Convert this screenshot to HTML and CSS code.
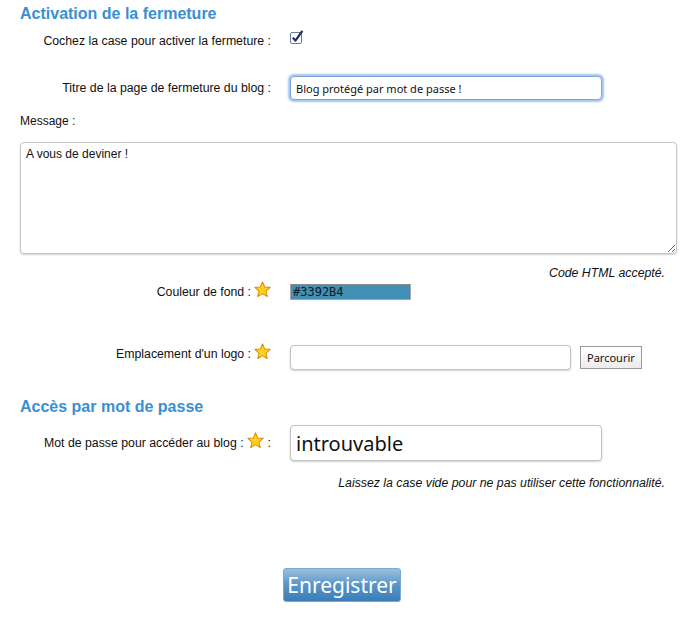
FILE: index.html
```html
<!DOCTYPE html>
<html lang="fr">

<head>
    <meta charset="UTF-8">
    <meta name="viewport" content="width=device-width, initial-scale=1.0">
    <title>Fermeture du blog</title>
    <link rel="stylesheet" href="styles.css">
</head>

<body>

    <form class="container">
        <h2>Activation de la fermeture</h2>

        <div class="row row-check">
            <label class="label">Cochez la case pour activer la fermeture :</label>
            <span class="checkbox">
                <svg width="14" height="14" viewBox="0 0 14 14">
                    <rect x="0.5" y="2.5" width="11" height="11" rx="1.5" fill="#fff" stroke="#6d7c96" />
                    <path d="M2.8 7.6 L5.4 10.6 L12.4 0.8" fill="none" stroke="#1c2d63" stroke-width="2.2"
                        stroke-linejoin="round" />
                </svg>
            </span>
        </div>

        <div class="row row-title">
            <label class="label">Titre de la page de fermeture du blog :</label>
            <input class="field field-focus" type="text" value="Blog protégé par mot de passe !">
        </div>

        <p class="free-label">Message :</p>
        <textarea class="message">A vous de deviner !</textarea>
        <p class="note">Code HTML accepté.</p>

        <div class="row row-color">
            <label class="label">Couleur de fond : <span class="star"><svg width="17" height="17" viewBox="0 0 20 20">
                        <polygon points="10,1 12.6,7 19,7.5 14.1,11.8 15.6,18.3 10,14.8 4.4,18.3 5.9,11.8 1,7.5 7.4,7"
                            fill="#ffd21f" stroke="#e08a00" stroke-width="1.2" stroke-linejoin="round" />
                    </svg></span></label>
            <input class="color-field" type="text" value="#3392B4">
        </div>

        <div class="row row-logo">
            <label class="label">Emplacement d'un logo : <span class="star"><svg width="17" height="17" viewBox="0 0 20 20">
                        <polygon points="10,1 12.6,7 19,7.5 14.1,11.8 15.6,18.3 10,14.8 4.4,18.3 5.9,11.8 1,7.5 7.4,7"
                            fill="#ffd21f" stroke="#e08a00" stroke-width="1.2" stroke-linejoin="round" />
                    </svg></span></label>
            <input class="field field-file" type="text">
            <span class="browse">Parcourir</span>
        </div>

        <h2 class="second">Accès par mot de passe</h2>

        <div class="row row-pass">
            <label class="label">Mot de passe pour accéder au blog : <span class="star star-mid"><svg width="17" height="17" viewBox="0 0 20 20">
                        <polygon points="10,1 12.6,7 19,7.5 14.1,11.8 15.6,18.3 10,14.8 4.4,18.3 5.9,11.8 1,7.5 7.4,7"
                            fill="#ffd21f" stroke="#e08a00" stroke-width="1.2" stroke-linejoin="round" />
                    </svg></span>:</label>
            <input class="field field-big" type="text" value="introuvable">
        </div>
        <p class="note note-pass">Laissez la case vide pour ne pas utiliser cette fonctionnalité.</p>

        <div class="submit-row">
            <span class="submit">Enregistrer</span>
        </div>
    </form>

</body>

</html>
```

FILE: styles.css
```css
body {
    margin: 0;
    font-family: 'Liberation Sans', Arial, sans-serif;
    font-size: 12px;
    color: #111;
    background: #fff;
}

.container {
    padding: 0 12px 0 20px;
}

h2 {
    margin: 0;
    padding-top: 5px;
    font-size: 16px;
    line-height: 18px;
    color: #3a8fd3;
}

h2.second {
    margin-top: 23px;
}

.row {
    display: flex;
    align-items: center;
}

.label {
    width: 251px;
    text-align: right;
    margin-right: 19px;
    display: flex;
    justify-content: flex-end;
    align-items: center;
    white-space: nowrap;
    font-size: 12.3px;
}

.star {
    display: inline-flex;
    margin-left: 3px;
    margin-top: -6px;
}

.star-mid {
    margin-right: 4px;
}

.row-check {
    margin-top: 10px;
    height: 16px;
}

.checkbox {
    display: inline-flex;
    margin-top: -8px;
}

.row-title {
    margin-top: 27px;
}

.field {
    box-sizing: border-box;
    border: 1px solid #c3c3c3;
    border-radius: 4px;
    box-shadow: 0 1px 2px rgba(0, 0, 0, 0.18);
    background: #fff;
    font-family: 'Noto Sans', 'DejaVu Sans', sans-serif;
    font-size: 11px;
    padding: 0 5px;
    color: #111;
    outline: none;
}

.field-focus {
    width: 312px;
    height: 24px;
    border: 1px solid #7ea6dd;
    box-shadow: 0 0 2px 2px #a6c4ec;
}

.free-label {
    margin: 14px 0 0;
    line-height: 14px;
}

.message {
    display: block;
    box-sizing: border-box;
    width: 657px;
    height: 112px;
    margin-top: 14px;
    border: 1px solid #c6c6c6;
    border-radius: 4px;
    box-shadow: 0 1px 2px rgba(0, 0, 0, 0.18);
    padding: 4px 5px;
    font-family: 'Liberation Sans', Arial, sans-serif;
    font-size: 12px;
    color: #111;
    resize: vertical;
    outline: none;
}

.note {
    margin: 12px 0 0;
    padding-right: 12px;
    text-align: right;
    font-style: italic;
    font-size: 12.3px;
    line-height: 14px;
}

.row-color {
    margin-top: 4px;
}

.color-field {
    box-sizing: border-box;
    width: 121px;
    height: 16px;
    border: 1px solid #a8a8a8;
    border-top-color: #8a8a8a;
    background: #418fb5;
    padding: 0 2px;
    font-family: 'DejaVu Sans Mono', monospace;
    font-size: 12px;
    color: #0d1a24;
    outline: none;
}

.row-logo {
    margin-top: 45px;
}

.row-logo .label {
    margin-bottom: 7px;
}

.field-file {
    width: 281px;
    height: 25px;
}

.browse {
    margin-left: 9px;
    box-sizing: border-box;
    height: 23px;
    padding: 0 6px;
    line-height: 21px;
    border: 1px solid #9a9a9a;
    background: linear-gradient(#ffffff, #ececec);
    font-family: 'Noto Sans', 'DejaVu Sans', sans-serif;
    font-size: 11px;
}

.row-pass {
    margin-top: 9px;
}

.field-big {
    width: 312px;
    height: 36px;
    font-size: 20px;
}

.note-pass {
    margin-top: 15px;
}

.submit-row {
    margin-top: 78px;
    padding-left: 263px;
}

.submit {
    display: inline-block;
    box-sizing: border-box;
    width: 118px;
    height: 34px;
    line-height: 32px;
    text-align: center;
    border: 1px solid #7fa8cc;
    border-radius: 3px;
    background: linear-gradient(#9cc0de, #5895c8 50%, #3a7db8);
    color: #fff;
    font-family: 'Noto Sans', 'DejaVu Sans', sans-serif;
    font-size: 21px;
    cursor: pointer;
}
```
